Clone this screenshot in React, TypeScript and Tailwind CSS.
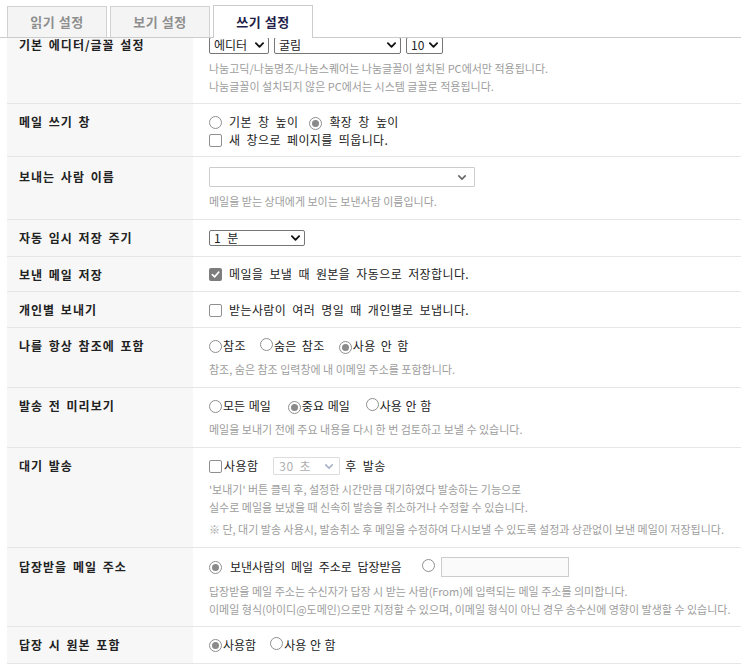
import React from "react";

const Chevron = ({ className = "" }: { className?: string }) => (
  <svg viewBox="0 0 10 6" className={className} fill="none">
    <polyline points="1,1 5,5 9,1" stroke="currentColor" strokeWidth="2" strokeLinecap="round" strokeLinejoin="round" />
  </svg>
);

const Radio = ({ checked = false }: { checked?: boolean }) => (
  <span className="inline-flex items-center justify-center w-[13px] h-[13px] shrink-0 rounded-full border border-[#8f8f8f] bg-white">
    {checked && <span className="w-[7px] h-[7px] rounded-full bg-[#8a8a8a]" />}
  </span>
);

const Check = ({ checked = false }: { checked?: boolean }) =>
  checked ? (
    <span className="inline-flex items-center justify-center w-[13px] h-[13px] shrink-0 rounded-[2px] bg-[#7d7d7d]">
      <svg viewBox="0 0 10 10" className="w-[9px] h-[9px]" fill="none">
        <polyline points="1.5,5.2 4,7.6 8.6,2.4" stroke="#fff" strokeWidth="1.8" strokeLinecap="round" strokeLinejoin="round" />
      </svg>
    </span>
  ) : (
    <span className="inline-block w-[13px] h-[13px] shrink-0 rounded-[2px] border border-[#8f8f8f] bg-white" />
  );

const Help = ({ children, className = "" }: { children: React.ReactNode; className?: string }) => (
  <p className={`text-[11px] leading-[18px] tracking-[0px] [word-spacing:0px] text-[#9d9d9d] whitespace-nowrap ${className}`}>{children}</p>
);

type RowProps = {
  label: string;
  children: React.ReactNode;
  labelPad?: string;
  valuePad?: string;
};

const Row = ({ label, children, labelPad = "pt-[9px]", valuePad = "pt-[9px] pb-[9px]" }: RowProps) => (
  <div className="flex border-b border-[#e6e6e6]">
    <div className={`w-[186px] shrink-0 bg-[#f7f7f7] pl-[12px] ${labelPad} text-[12px] font-bold leading-[18px] tracking-[1px] [word-spacing:2px] text-[#222]`}>
      {label}
    </div>
    <div className={`flex-1 min-w-0 pl-[16px] ${valuePad} text-[12px] leading-[18px] tracking-[0.4px] [word-spacing:3px] text-[#222]`}>{children}</div>
  </div>
);

const tabs = [
  { name: "읽기 설정", active: false },
  { name: "보기 설정", active: false },
  { name: "쓰기 설정", active: true },
];

export default function App() {
  return (
    <div className="w-[741px] h-[669px] overflow-hidden bg-white" style={{ fontFamily: '"Noto Sans CJK KR", "Noto Sans", sans-serif' }}>
      {/* tabs */}
      <div className="relative z-10 h-[38px] bg-white border-b border-[#cccccc] flex items-end gap-[3px] pl-[7px]">
        {tabs.map((t) =>
          t.active ? (
            <div key={t.name} className="w-[100px] h-[33px] -mb-px bg-white border border-b-0 border-[#cccccc] flex items-center justify-center text-[13px] font-bold tracking-[0.5px] text-[#1e1e48]">
              {t.name}
            </div>
          ) : (
            <div key={t.name} className="w-[100px] h-[31px] bg-[#f4f4f4] border border-b-0 border-[#d2d2d2] flex items-center justify-center text-[13px] font-bold tracking-[0.5px] text-[#8e8e8e]">
              {t.name}
            </div>
          )
        )}
      </div>

      <div className="-mt-[11px] pl-[7px]">
        <Row label="기본 에디터/글꼴 설정" valuePad="pt-[9px] pb-[8px]">
          <div className="flex items-center gap-[5px] h-[18px] tracking-[0px] [word-spacing:0px]">
            <span className="w-[60px] h-[17px] border border-[#767676] rounded-[2px] flex items-center justify-between px-[4px]">
              에디터 <Chevron className="w-[9px] h-[6px] text-[#111]" />
            </span>
            <span className="w-[127px] h-[17px] border border-[#767676] rounded-[2px] flex items-center justify-between px-[4px]">
              굴림 <Chevron className="w-[9px] h-[6px] text-[#111]" />
            </span>
            <span className="w-[37px] h-[17px] border border-[#767676] rounded-[2px] flex items-center justify-between px-[4px]">
              10 <Chevron className="w-[9px] h-[6px] text-[#111]" />
            </span>
          </div>
          <Help className="mt-[5px]">나눔고딕/나눔명조/나눔스퀘어는 나눔글꼴이 설치된 PC에서만 적용됩니다.</Help>
          <Help>나눔글꼴이 설치되지 않은 PC에서는 시스템 글꼴로 적용됩니다.</Help>
        </Row>

        <Row label="메일 쓰기 창" valuePad="pt-[9px] pb-[7px]">
          <div className="flex items-center h-[18px]">
            <Radio />
            <span className="ml-[7px]">기본 창 높이</span>
            <span className="ml-[11px]"><Radio checked /></span>
            <span className="ml-[7px]">확장 창 높이</span>
          </div>
          <div className="flex items-center h-[18px]">
            <Check />
            <span className="ml-[7px]">새 창으로 페이지를 띄웁니다.</span>
          </div>
        </Row>

        <Row label="보내는 사람 이름" labelPad="pt-[11px]" valuePad="pt-[10px] pb-[9px]">
          <div className="w-[266px] h-[20px] border border-[#cccccc] rounded-[1px] flex items-center justify-end pr-[8px]">
            <Chevron className="w-[8px] h-[5px] text-[#666]" />
          </div>
          <Help className="mt-[5px]">메일을 받는 상대에게 보이는 보낸사람 이름입니다.</Help>
        </Row>

        <Row label="자동 임시 저장 주기">
          <div className="flex items-center h-[18px]">
            <span className="w-[96px] h-[16px] border border-[#767676] rounded-[2px] flex items-center justify-between px-[4px]">
              1 분 <Chevron className="w-[9px] h-[6px] text-[#111]" />
            </span>
          </div>
        </Row>

        <Row label="보낸 메일 저장" valuePad="pt-[8px] pb-[8px]">
          <div className="flex items-center h-[18px]">
            <Check checked />
            <span className="ml-[7px]">메일을 보낼 때 원본을 자동으로 저장합니다.</span>
          </div>
        </Row>

        <Row label="개인별 보내기" valuePad="pt-[9px] pb-[8px]">
          <div className="flex items-center h-[18px]">
            <Check />
            <span className="ml-[7px]">받는사람이 여러 명일 때 개인별로 보냅니다.</span>
          </div>
        </Row>

        <Row label="나를 항상 참조에 포함" valuePad="pt-[9px] pb-[9px]">
          <div className="flex items-center h-[18px] [word-spacing:2px]">
            <Radio />
            <span className="ml-[1px]">참조</span>
            <span className="ml-[14px]"><Radio /></span>
            <span className="ml-[1px]">숨은 참조</span>
            <span className="ml-[14px]"><Radio checked /></span>
            <span className="ml-[1px]">사용 안 함</span>
          </div>
          <Help className="mt-[5px]">참조, 숨은 참조 입력창에 내 이메일 주소를 포함합니다.</Help>
        </Row>

        <Row label="발송 전 미리보기" valuePad="pt-[9px] pb-[9px]">
          <div className="flex items-center h-[18px] tracking-[0px] [word-spacing:1px]">
            <Radio />
            <span className="ml-[1px]">모든 메일</span>
            <span className="ml-[17px]"><Radio checked /></span>
            <span className="ml-[1px]">중요 메일</span>
            <span className="ml-[16px]"><Radio /></span>
            <span className="ml-[1px]">사용 안 함</span>
          </div>
          <Help className="mt-[5px]">메일을 보내기 전에 주요 내용을 다시 한 번 검토하고 보낼 수 있습니다.</Help>
        </Row>

        <Row label="대기 발송" valuePad="pt-[9px] pb-[9px]">
          <div className="flex items-center h-[18px]">
            <Check />
            <span className="ml-[2px]">사용함</span>
            <span className="ml-[15px] w-[67px] h-[18px] border border-[#dddddd] rounded-[1px] flex items-center justify-between pl-[5px] pr-[6px] text-[#b0b0b0]">
              30 초 <Chevron className="w-[8px] h-[5px] text-[#a9b4c8]" />
            </span>
            <span className="ml-[5px]">후 발송</span>
          </div>
          <Help className="mt-[5px]">'보내기' 버튼 클릭 후, 설정한 시간만큼 대기하였다 발송하는 기능으로</Help>
          <Help>실수로 메일을 보냈을 때 신속히 발송을 취소하거나 수정할 수 있습니다.</Help>
          <Help className="mt-[4px]">※ 단, 대기 발송 사용시, 발송취소 후 메일을 수정하여 다시보낼 수 있도록 설정과 상관없이 보낸 메일이 저장됩니다.</Help>
        </Row>

        <Row label="답장받을 메일 주소" labelPad="pt-[10px]" valuePad="pt-[9px] pb-[8px]">
          <div className="flex items-center h-[20px] tracking-[0px]">
            <Radio checked />
            <span className="ml-[8px]">보낸사람의 메일 주소로 답장받음</span>
            <span className="ml-[20px]"><Radio /></span>
            <span className="ml-[6px] w-[128px] h-[20px] border border-[#cccccc] bg-[#fafafa]" />
          </div>
          <Help className="mt-[5px]">답장받을 메일 주소는 수신자가 답장 시 받는 사람(From)에 입력되는 메일 주소를 의미합니다.</Help>
          <Help>이메일 형식(아이디@도메인)으로만 지정할 수 있으며, 이메일 형식이 아닌 경우 송수신에 영향이 발생할 수 있습니다.</Help>
        </Row>

        <Row label="답장 시 원본 포함" valuePad="pt-[9px] pb-[9px]">
          <div className="flex items-center h-[18px] tracking-[0px] [word-spacing:1px]">
            <Radio checked />
            <span className="ml-[1px]">사용함</span>
            <span className="ml-[14px]"><Radio /></span>
            <span className="ml-[1px]">사용 안 함</span>
          </div>
        </Row>
      </div>
    </div>
  );
}
